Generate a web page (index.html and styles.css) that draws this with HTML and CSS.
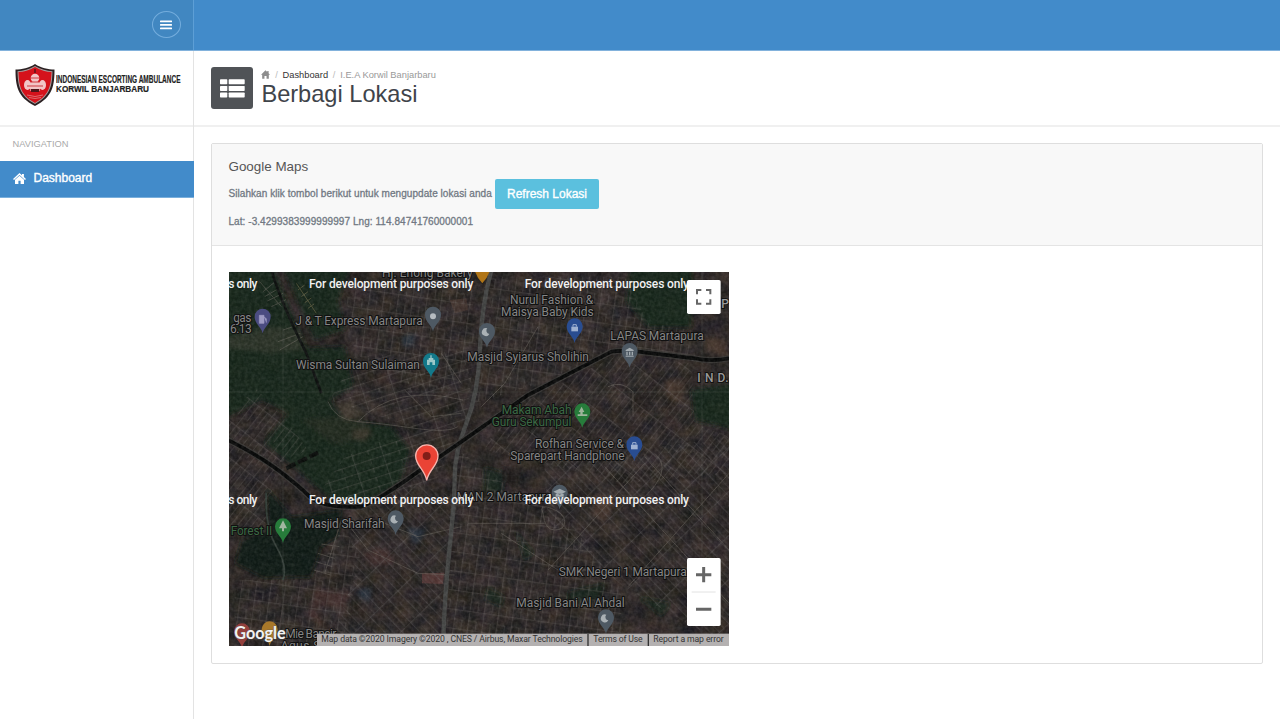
FILE: index.html
```html
<!DOCTYPE html>
<html lang="id">
<head>
<meta charset="utf-8">
<title>Berbagi Lokasi</title>
<link rel="stylesheet" href="styles.css">
</head>
<body>
<header class="topbar">
  <div class="topbar-left">
    <button class="menu-toggle" aria-label="Menu">
      <svg width="12" height="10" viewBox="0 0 12 10"><path d="M.8 1.4h10.4M.8 4.9h10.4M.8 8.4h10.4" stroke="#fff" stroke-width="1.9" stroke-linecap="round"/></svg>
    </button>
  </div>
</header>
<div class="shell">
  <aside class="sidebar">
    <div class="brand">
      <svg width="42" height="44" viewBox="0 0 42 44">
        <path d="M21 1C15 5 8 6.500 1.500 6.500C1.500 22 3 34 21 43C39 34 40.500 22 40.500 6.500C34 6.500 27 5 21 1Z" fill="#2b2022"/>
        <path d="M21 3C15 6.500 9 8 3.500 8.300C4 22 5 32.500 21 41C37 32.500 38 22 38.500 8.300C33 8 27 6.500 21 3Z" fill="#a79c9c"/>
        <path d="M21 3.900C15 7.400 10 8.600 4.500 9.100C5 22 6.200 31.900 21 40C35.800 31.900 37 22 37.500 9.100C32 8.600 27 7.400 21 3.900Z" fill="#d5121b"/>
        <path d="M20 6h2v4h-2z" fill="#7b1118"/>
        <g fill="#f2c6c7"><circle cx="21" cy="15" r="4.300"/><path d="M16 20q5-5 10 0v8H16z"/><ellipse cx="13.500" cy="22" rx="3.500" ry="5"/><ellipse cx="28.500" cy="22" rx="3.500" ry="5"/></g>
        <path d="M16 15h10M17 19h8M13 23h16M15 27h12" stroke="#c92a31" stroke-width=".9"/>
        <path d="M17 26h8v3h-8z" fill="#4d1619"/>
        <path d="M13 32q8 3 16 0M15 34.500q6 2 12 0" fill="none" stroke="#e06a6d" stroke-width="1"/>
      </svg>
      <svg class="brand-name" width="126" height="24" viewBox="0 0 126 24">
        <text class="brand-line1" x="0" y="11.500" textLength="124.500" lengthAdjust="spacingAndGlyphs">INDONESIAN ESCORTING AMBULANCE</text>
        <text class="brand-line2" x="0" y="21" textLength="93" lengthAdjust="spacingAndGlyphs">KORWIL BANJARBARU</text>
      </svg>
    </div>
    <div class="nav-title">NAVIGATION</div>
    <a class="nav-item"><svg width="13" height="11" viewBox="0 0 13 11" fill="#fff"><path d="M6.500 0L9 2.300V1h1.900v3L13 6l-1 1-5.500-4.900L1 7 0 6z"/><path d="M2 6.800l4.500-4L11 6.800V11H7.600V7.800H5.400V11H2z"/></svg><span>Dashboard</span></a>
  </aside>
  <main class="main">
    <section class="page-head">
      <div class="page-icon"><svg width="25" height="19" viewBox="0 0 25 19" fill="#fff"><rect y=".3" width="7.300" height="5" rx=".7"/><rect x="8.700" y=".3" width="16" height="5" rx=".7"/><rect y="6.900" width="7.300" height="5" rx=".7"/><rect x="8.700" y="6.900" width="16" height="5" rx=".7"/><rect y="13.500" width="7.300" height="5" rx=".7"/><rect x="8.700" y="13.500" width="16" height="5" rx=".7"/></svg></div>
      <div class="page-title">
        <div class="crumbs"><svg width="9" height="9" viewBox="0 0 13 12" fill="#8d8d8d"><path d="M6.500 0L9 2.300V1h2v3.200L13 6.500h-1.700V12H8V8H5v4H1.700V6.500H0z"/></svg><i>/</i><b>Dashboard</b><i>/</i><span>I.E.A Korwil Banjarbaru</span></div>
        <h1>Berbagi Lokasi</h1>
      </div>
    </section>
    <section class="panel">
      <div class="panel-head">
        <h2>Google Maps</h2>
        <div class="refresh-row"><span class="hint">Silahkan klik tombol berikut untuk mengupdate lokasi anda</span><button class="btn">Refresh Lokasi</button></div>
        <p class="coords">Lat: -3.4299383999999997 Lng: 114.84741760000001</p>
      </div>
      <div class="panel-body">
        <svg class="map" width="500" height="374" viewBox="3 6 1500 1122">
          <defs>
            <filter id="ground" x="0" y="0" width="100%" height="100%" color-interpolation-filters="sRGB">
              <feTurbulence type="fractalNoise" baseFrequency=".02" numOctaves="4" seed="8"/>
              <feColorMatrix values=".2 .08 0 0 .045  .13 .09 0 0 .052  .1 .06 .08 0 .038  0 0 0 0 1"/>
            </filter>
            <filter id="grain" x="0" y="0" width="100%" height="100%" color-interpolation-filters="sRGB">
              <feTurbulence type="fractalNoise" baseFrequency=".1" numOctaves="2" seed="3"/>
              <feColorMatrix values="1 0 0 0 -.3  .95 .05 0 0 -.3  .95 0 .05 0 -.31  0 0 0 0 .14"/>
            </filter>
            <filter id="soft"><feGaussianBlur stdDeviation="6"/></filter>
            <pattern id="gridA" width="43" height="57" patternUnits="userSpaceOnUse" patternTransform="rotate(8)"><path d="M0 2H43M0 30H24M2 0V57M25 30V57" class="street"/></pattern>
            <pattern id="gridB" width="34" height="88" patternUnits="userSpaceOnUse" patternTransform="rotate(38)"><path d="M2 0V88M0 2H34M18 2V60" class="street"/></pattern>
            <pattern id="gridC" width="38" height="95" patternUnits="userSpaceOnUse" patternTransform="rotate(-44)"><path d="M2 0V95M0 2H38M20 30V95" class="street"/></pattern>
            <pattern id="gridD" width="90" height="28" patternUnits="userSpaceOnUse" patternTransform="rotate(-18)"><path d="M0 2H90M2 0V28M50 0V14" class="street"/></pattern>
            <path id="pin" d="M0 38C-4 18-24 10-24-12A24 24 0 0 1 24-12C24 10 4 18 0 38Z"/>
            <path id="moon" d="M4-22A12 12 0 1 0 10-5A10 10 0 0 1 4-22Z" fill="#aab1b5"/>
            <g id="bag"><rect x="-10" y="-17" width="20" height="14" fill="#9eb1d1"/><path d="M-5-17v-6H5v6" fill="none" stroke="#9eb1d1" stroke-width="3"/></g>
          </defs>
          <rect x="1" y="4" width="1504" height="1126" filter="url(#ground)"/>
          <g class="field" filter="url(#soft)">
            <path d="M-20-20H130L235 235 350 230 375 350 305 390 350 450 490 470 545 540 515 640 410 700 300 680 200 590 110 520 180 430 100 390 -20 450Z"/>
            <path d="M160-20H370L330 90 350 180 260 210Z"/>
            <path d="M1210-20H1390V170L1260 170 1195 95Z"/>
            <path d="M1390 360L1520 340V480L1400 450Z"/>
            <path class="forest" d="M115 650L190 740 340 720 330 800 280 830 250 920 110 925 20 880 40 810 120 780Z"/>
            <path d="M770 590L835 610 820 670 770 665ZM1020 965L1130 940 1110 990 1020 1005ZM1230 980L1330 1000 1300 1040ZM860 780L920 850 890 870ZM780 950L830 980 820 1010 770 990Z" opacity=".7"/>
          </g>
          <g filter="url(#soft)" opacity=".55">
            <path d="M220 450L400 430 440 500 320 525Z" fill="#2f3226"/>
            <path d="M375 480L430 475 410 515 375 505Z" fill="#5c4a3d"/>
            <path d="M315 400L375 395 415 430 350 450Z" fill="#58503f"/>
            <path d="M1310 330L1370 340 1365 400 1320 390ZM1430 200L1500 210V260L1430 240ZM1110 670L1170 690 1130 760 1090 730Z" fill="#5e4637"/>
            <path d="M1220 360L1280 370 1270 430 1225 420ZM820 590L880 600 870 650 820 640Z" fill="#211d1a"/>
            <path d="M400 850L480 835 500 880 430 890ZM260 960L370 970 310 1080 240 1040ZM250 1010L300 1080 360 1010ZM430 830L490 850 470 890Z" fill="#5a3a39"/>
            <path d="M540 770L590 780 575 820 550 815ZM390 960L430 950 425 995 395 985ZM520 200L560 190 560 225 525 230Z" fill="#35475a"/>
          </g>
          <path d="M582 910L648 908 645 942 582 940Z" fill="#643f3d" opacity=".8"/>
          <path d="M665 90L715 85 720 120 680 130Z" fill="#4e3a33" opacity=".7"/>
          <path d="M350 50L730 20 745 260 660 360 520 340 380 250Z" fill="url(#gridA)"/>
          <path d="M380 260L740 240 710 480 600 490 305 390Z" fill="url(#gridD)"/>
          <path d="M770 20H1190L1260 160 1390 180 1400 260 1180 240 1000 320 740 400Z" fill="url(#gridA)"/>
          <path d="M820 430L1170 255 1390 280 1400 460 1505 500V610L1180 640 950 580 770 540Z" fill="url(#gridB)"/>
          <path d="M950 580L1505 500V1130L1200 960 960 770Z" fill="url(#gridC)"/>
          <path d="M690 540L840 650 1020 750 1180 960 1180 1130H650Z" fill="url(#gridA)"/>
          <path d="M360 710L560 640 680 680 650 1130H300L380 920Z" fill="url(#gridC)"/>
          <path d="M20 930L250 930 340 780 400 830 350 1130H20Z" fill="url(#gridA)"/>
          <path d="M0 450L80 350 180 460 240 540 150 580 110 770 0 770Z" fill="url(#gridB)"/>
          <path d="M350 560L560 470 690 500 620 640 430 700 280 660Z" fill="url(#gridD)"/>
          <path d="M0 200L130 170 215 180 230 240 130 250 0 235Z" fill="#5d554a" opacity=".32" filter="url(#soft)"/>
          <g class="lane">
            <path d="M95 35L160 110M105 65L142 35M110 80L153 55M118 93L165 70M130 110L174 89M150 215L217 190M155 240L225 200M165 180L210 165"/>
            <path d="M205 40L265 130M210 60L230 45M220 80L240 65M230 98L250 84M240 115L258 102" stroke="#93865e"/>
            <path d="M300 395Q320 450 390 455T560 475 690 470M390 455Q500 340 705 390M530 360L610 440 700 430M640 250L700 340M760 410L830 340 930 170M720 760H950M820 790L990 900 1180 900M470 760L570 800 700 770M350 750L420 840 570 910 680 915M945 730Q930 700 970 715T1010 755 980 780 945 730M1140 350Q1180 330 1215 365V440M1250 560L1503 840M1130 590L1503 1000M960 900L1250 580M1200 950L1503 610M1280 550Q1340 600 1240 690"/>
            <path d="M270 850L320 865M263 875L313 890M257 900L307 915M280 822L335 830M340 750L290 910"/>
          </g>
          <path d="M790 0Q760 110 755 250Q750 370 715 460T680 620 665 830 645 1130" fill="none" stroke="#4a4b4a" stroke-width="13"/>
          <path d="M130 0Q160 100 235 250L280 370" fill="none" stroke="#101312" stroke-width="8"/>
          <path d="M115 670Q110 770 145 830T165 930" fill="none" stroke="#37423c" stroke-width="5"/>
          <path d="M165 0V1130M0 366H1505M1422 0V1130" stroke="#697169" stroke-width="2" opacity=".35"/>
          <path d="M0 510Q90 555 150 600T245 680T400 710Q460 685 570 605L700 515 900 375 1150 245Q1180 240 1230 245L1400 265Q1450 276 1505 265" fill="none" stroke="#3c3a38" stroke-width="18"/>
          <path d="M0 510Q90 555 150 600T245 680T400 710Q460 685 570 605L700 515 900 375 1150 245Q1180 240 1230 245L1400 265Q1450 276 1505 265" fill="none" stroke="#080909" stroke-width="11"/>
          <path d="M175 595L270 548" stroke="#0c0f0d" stroke-width="12" stroke-dasharray="30 9"/>
          <rect x="1" y="4" width="1504" height="1126" filter="url(#grain)"/>
          <g>
            <use href="#pin" x="104" y="152" fill="#4b4c81"/><path d="M94 136h14v24H94zm14 5 7 5v12" fill="#9e9bc3" stroke="#9e9bc3" stroke-width="2"/>
            <use href="#pin" x="615" y="146" fill="#4e5963"/><circle cx="615" cy="139" r="9" fill="#b5bcc1"/>
            <use href="#pin" x="777" y="195" fill="#4e5963"/><use href="#moon" x="774" y="197"/>
            <use href="#pin" x="1040" y="181" fill="#294d91"/><use href="#bag" x="1040" y="187"/>
            <use href="#pin" x="1205" y="255" fill="#4e5963"/><path d="M1193 240l12-7 12 7v3h-24zM1195 245h4v11h-4zm8 0h4v11h-4zm8 0h4v11h-4zM1193 257h24v3h-24z" fill="#a3abb0"/>
            <use href="#pin" x="609" y="285" fill="#13798a"/><path d="M597 285v-16h5v-5h5v-8h4v8h5v5h5v16h-8v-8h-8v8z" fill="#9dc8c9"/>
            <use href="#pin" x="1063" y="436" fill="#277c3b"/><path d="M1061 410l8 16h-5v7h14v5h-29v-5h8v-7h-5z" fill="#9eb49c"/>
            <use href="#pin" x="1219" y="535" fill="#294d91"/><use href="#bag" x="1219" y="541"/>
            <use href="#pin" x="995" y="680" fill="#4e5963"/><path d="M976 665l19-9 19 9-19 9zm7 6v9h24v-9" fill="#a3abb0"/>
            <use href="#pin" x="503" y="757" fill="#4e5963"/><use href="#moon" x="500" y="759"/>
            <use href="#pin" x="165" y="781" fill="#277c3b"/><path d="M165 751l12 24h-9v9h-6v-9h-9z" fill="#a1b7a0"/>
            <use href="#pin" x="1134" y="1054" fill="#4e5963"/><use href="#moon" x="1131" y="1056"/>
            <path d="M741 4h44q-6 19-22 36-16-17-22-36" fill="#b07517"/>
            <use href="#pin" x="42" y="1096" fill="#933f3c"/><use href="#pin" x="125" y="1090" fill="#a8782a"/>
          </g>
          <g class="place">
            <text x="462" y="20" textLength="272">Hj. Enong Bakery</text>
            <text x="16" y="155" textLength="54">gas</text><text x="6" y="188" textLength="65">6.13</text>
            <text x="202" y="165" textLength="382">J &amp; T Express Martapura</text>
            <text x="846" y="101" textLength="250">Nurul Fashion &amp;</text>
            <text x="819" y="137" textLength="278">Maisya Baby Kids</text>
            <text x="1147" y="210" textLength="280">LAPAS Martapura</text>
            <text x="718" y="273" textLength="365">Masjid Syiarus Sholihin</text>
            <text x="204" y="298" textLength="372">Wisma Sultan Sulaiman</text>
            <text class="region" x="1408" y="336" textLength="94">I N D.</text>
            <text class="region" x="1480" y="114">P</text>
            <text class="park" x="821" y="433" textLength="210">Makam Abah</text>
            <text class="park" x="791" y="468" textLength="239">Guru Sekumpul</text>
            <text x="921" y="534" textLength="267">Rofhan Service &amp;</text>
            <text x="847" y="569" textLength="343">Sparepart Handphone</text>
            <text x="686" y="693" textLength="286">MAN 2 Martapura</text>
            <text x="228" y="773" textLength="242">Masjid Sharifah</text>
            <text class="park" x="8" y="795" textLength="125">Forest II</text>
            <text x="992" y="917" textLength="384">SMK Negeri 1 Martapura</text>
            <text x="865" y="1010" textLength="325">Masjid Bani Al Ahdal</text>
            <text x="172" y="1105" textLength="153">Mie Bancir</text>
            <text x="158" y="1139" textLength="170">Agus Sasi</text>
          </g>
          <g class="notice">
            <text x="1" y="55" textLength="87">s only</text><text x="243" y="55" textLength="493">For development purposes only</text><text x="890" y="55" textLength="493">For development purposes only</text>
            <text x="1" y="703" textLength="87">s only</text><text x="243" y="703" textLength="493">For development purposes only</text><text x="890" y="703" textLength="493">For development purposes only</text>
          </g>
          <path d="M596 631C590 597 563 587 563 558A33.500 33.500 0 0 1 630 558C630 587 603 597 596 631Z" fill="#ea4335" stroke="#f7b5ae" stroke-width="4"/>
          <circle cx="596" cy="558" r="12" fill="#811e18"/>
          <g class="control">
            <rect x="1377" y="30" width="101" height="102" rx="5"/>
            <path d="M1407 73V60h13M1434 60h13v13M1447 88v13h-13M1420 101h-13V88" fill="none" stroke="#666" stroke-width="6"/>
            <rect x="1377" y="864" width="101" height="204" rx="5"/>
            <path d="M1391 966h72" stroke="#e2e2e2" stroke-width="3"/>
            <path d="M1404 914h46M1427 891v46M1404 1018h46" stroke="#666" stroke-width="9"/>
          </g>
          <text class="google" x="19" y="1107" textLength="154" lengthAdjust="spacingAndGlyphs">Google</text>
          <rect x="267" y="1091" width="1238" height="39" fill="#b4b1b1"/>
          <path d="M1080 1092v38M1261 1092v38" stroke="#333" stroke-width="4"/>
          <g class="legal"><text x="280" y="1117" textLength="784">Map data ©2020 Imagery ©2020 , CNES / Airbus, Maxar Technologies</text><text x="1096" y="1117" textLength="148">Terms of Use</text><text x="1276" y="1117" textLength="211">Report a map error</text></g>
        </svg>
      </div>
    </section>
  </main>
</div>
</body>
</html>
```
FILE: styles.css
```css
* { box-sizing: border-box; }
body { margin: 0; height: 719px; overflow: hidden; display: flex; flex-direction: column; font-family: "Liberation Sans", Arial, sans-serif; background: #fff; color: #4f565e; }
.topbar { height: 51px; flex: none; background: #428bca; border-bottom: 1px solid #82b2dc; }
.topbar-left { width: 194px; height: 50px; background: #4187c1; border-right: 1px solid #5d9fd6; display: flex; justify-content: flex-end; padding: 11px 12px 0 0; }
.menu-toggle { width: 29px; height: 27px; padding: 0 1px 0 0; border: 1px solid #74addd; border-radius: 50%; background: transparent; display: flex; align-items: center; justify-content: center; }
.shell { flex: 1; display: flex; }
.sidebar { width: 194px; border-right: 1px solid #e3e3e3; }
.brand { height: 76px; border-bottom: 2px solid #f0f0f0; display: flex; padding: 12px 0 0 14px; }
.brand-name { margin-top: 8px; font-weight: bold; fill: #222; stroke: #222; stroke-width: .2px; }
.brand-line1 { font-size: 11.3px; }
.brand-line2 { font-size: 9.3px; }
.nav-title { height: 34px; padding: 11px 0 0 12.5px; font: 9.3px/12px "Liberation Sans", sans-serif; color: #aaa; }
.nav-item { width: 194px; height: 37px; border-bottom: 1px solid #7aafdc; background: #428bca; color: #fff; display: flex; align-items: center; gap: 7.5px; padding: 0 0 2px 13px; font-size: 12px; -webkit-text-stroke: .35px #fff; }
.main { flex: 1; }
.page-head { height: 76px; border-bottom: 2px solid #f0f0f0; display: flex; gap: 8.4px; padding: 16px 0 0 17px; }
.page-icon { width: 42px; height: 42px; border-radius: 3px; background: #505357; display: flex; align-items: center; justify-content: center; }
.page-title { padding-top: 2px; }
.crumbs { display: flex; align-items: center; height: 11px; font-size: 9.3px; color: #999; white-space: nowrap; }
.crumbs i { font-style: normal; color: #bbb; margin: 0 4.8px; }
.crumbs b { font-weight: normal; color: #333; }
h1 { margin: 0; font-size: 23.6px; line-height: 28px; font-weight: normal; color: #3f444a; }
.panel { width: 1052px; height: 521px; margin: 16px 0 0 17px; border: 1px solid #dedede; border-radius: 2px; }
.panel-head { height: 102px; background: #f8f8f8; border-bottom: 1px solid #e4e4e4; padding: 14px 0 0 16.5px; }
h2 { margin: 0; font-size: 13.4px; line-height: 18px; font-weight: normal; color: #555; }
.refresh-row { display: flex; gap: 3px; margin-top: 3px; height: 30px; }
.hint { width: 263.5px; font-size: 10px; letter-spacing: .055px; line-height: 29px; white-space: nowrap; color: #717883; -webkit-text-stroke: .3px #717883; }
.btn { width: 104px; height: 30px; padding: 0 0 1px; border: 0; border-radius: 2px; background: #5bc0de; color: #fff; font: 12px "Liberation Sans", sans-serif; -webkit-text-stroke: .35px #fff; }
.coords { margin: 5.6px 0 0; font-size: 10px; letter-spacing: .06px; line-height: 14px; color: #717883; -webkit-text-stroke: .3px #717883; }
.panel-body { padding: 26px 0 0 17px; }
.map { display: block; font-family: Roboto, sans-serif; }
.street { fill: none; stroke: #777270; stroke-width: 2.4; opacity: .42; }
.lane { fill: none; stroke: #77726a; stroke-width: 3; opacity: .5; }
.field { fill: #14291e; opacity: .86; }
.forest { fill: #0d1a15; }
.place { font-size: 36px; fill: #858585; stroke: #111; stroke-width: 6px; paint-order: stroke; }
.park { fill: #3b6844; }
.region { fill: #999; font-weight: 500; }
.notice { font-size: 36px; font-weight: 500; fill: #f1f1f1; }
.control { fill: #fff; }
.google { font: bold 50px Lato, sans-serif; fill: #f2f2f2; stroke: #555; stroke-width: 2px; paint-order: stroke; }
.legal { font-size: 26px; fill: #333; }
```
